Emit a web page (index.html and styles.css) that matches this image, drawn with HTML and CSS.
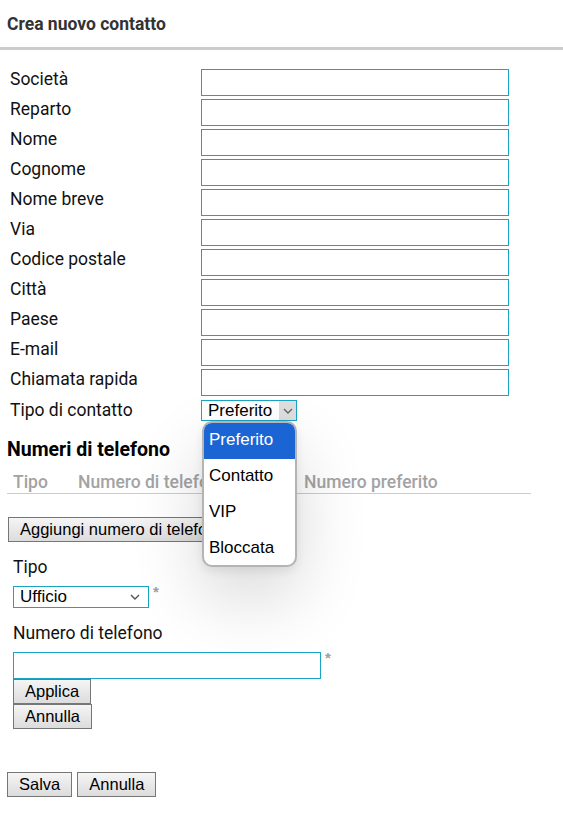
FILE: index.html
```html
<!DOCTYPE html>
<html lang="it">
<head>
<meta charset="utf-8">
<title>Crea nuovo contatto</title>
<link rel="stylesheet" href="styles.css">
</head>
<body>
<header class="topbar"><h1 class="title">Crea nuovo contatto</h1></header>

<form class="contact-form">
  <div class="row"><label class="lbl">Società</label><div class="field"></div></div>
  <div class="row"><label class="lbl">Reparto</label><div class="field"></div></div>
  <div class="row"><label class="lbl">Nome</label><div class="field"></div></div>
  <div class="row"><label class="lbl">Cognome</label><div class="field"></div></div>
  <div class="row"><label class="lbl">Nome breve</label><div class="field"></div></div>
  <div class="row"><label class="lbl">Via</label><div class="field"></div></div>
  <div class="row"><label class="lbl">Codice postale</label><div class="field"></div></div>
  <div class="row"><label class="lbl">Città</label><div class="field"></div></div>
  <div class="row"><label class="lbl">Paese</label><div class="field"></div></div>
  <div class="row"><label class="lbl">E-mail</label><div class="field"></div></div>
  <div class="row"><label class="lbl">Chiamata rapida</label><div class="field"></div></div>
  <div class="row last">
    <label class="lbl">Tipo di contatto</label>
    <div class="select-wrap">
      <div class="select type-select"><span class="sel-text">Preferito</span><span class="sel-arrow"><svg width="10" height="6" viewBox="0 0 10 6"><path d="M1 1l4 4 4-4" fill="none" stroke="#666" stroke-width="1.4"/></svg></span></div>
      <ul class="menu">
        <li class="opt active">Preferito</li>
        <li class="opt">Contatto</li>
        <li class="opt">VIP</li>
        <li class="opt">Bloccata</li>
      </ul>
    </div>
  </div>
</form>

<section class="phones">
  <h2 class="sub">Numeri di telefono</h2>
  <div class="thead">
    <span class="th c1">Tipo</span>
    <span class="th c2">Numero di telefono</span>
    <span class="th c3">Numero preferito</span>
  </div>
  <button type="button" class="btn add">Aggiungi numero di telefono</button>

  <div class="editor">
    <div class="ed-label">Tipo</div>
    <div class="ed-line">
      <div class="select small-select"><span class="sel-text">Ufficio</span><svg class="chev" width="10" height="6" viewBox="0 0 10 6"><path d="M1 1l4 4 4-4" fill="none" stroke="#555" stroke-width="1.4"/></svg></div>
      <span class="req">*</span>
    </div>
    <div class="ed-label num-label">Numero di telefono</div>
    <div class="ed-line">
      <div class="field phone-field"></div>
      <span class="req">*</span>
    </div>
    <div class="ed-buttons">
      <button type="button" class="btn">Applica</button>
      <button type="button" class="btn">Annulla</button>
    </div>
  </div>
</section>

<div class="footer-buttons">
  <button type="button" class="btn">Salva</button>
  <button type="button" class="btn">Annulla</button>
</div>
</body>
</html>
```

FILE: styles.css
```css
* { box-sizing: border-box; }
html, body { margin: 0; padding: 0; background: #fff; }
body { font-family: Roboto, "Noto Sans", Arial, sans-serif; color: #111; width: 563px; }

.topbar {
  height: 50px;
  border-bottom: 3px solid #cccccc;
  padding: 0 7px;
  display: flex;
  align-items: center;
}
.title { margin: 0; font-size: 17.5px; font-weight: 700; color: #333; line-height: 20px; position: relative; top: 0; }

.contact-form { margin-top: 19px; padding-left: 10px; display: flex; flex-direction: column; gap: 3px; }
.row { display: grid; grid-template-columns: 191px 308px; height: 27px; }
.row.last { height: 22px; }
.lbl { font-size: 17.5px; line-height: 21px; color: #111; }
.row.last .lbl { line-height: 22px; }
.field { height: 27px; border: 1px solid #1aa4c4; background: #fff; }

.select-wrap { position: relative; width: 96px; }
.select { border: 1px solid #1aa4c4; background: #fff; display: flex; align-items: center; font-family: "Liberation Sans", Arial, sans-serif; font-size: 17px; color: #000; }
.type-select { height: 21px; margin-top: 1px; width: 96px; padding-left: 6px; }
.type-select .sel-text { flex: 1; line-height: 19px; }
.sel-arrow { width: 17px; height: 19px; background: #dedede; display: flex; align-items: center; justify-content: center; }

.menu {
  position: absolute; top: 22px; left: 1px; width: 95px; height: 146px;
  margin: 0; padding: 0; list-style: none;
  background: #fff; border: 2px solid #b4b4b4; border-radius: 10px; overflow: hidden;
  box-shadow: 0 30px 70px rgba(0,0,0,0.16), 0 4px 10px rgba(0,0,0,0.08);
  font-family: "Liberation Sans", Arial, sans-serif; font-size: 17px; color: #000;
  z-index: 5;
}
.opt { height: 36px; line-height: 34px; padding-left: 5px; }
.opt.active { background: #1b64d4; color: #fff; }

.phones { padding: 0 0 0 7px; }
.sub { margin: 18px 0 0; font-size: 19.5px; line-height: 22px; font-weight: 700; color: #000; }
.thead { margin-top: 11px; width: 524px; border-bottom: 1px solid #cccccc; display: grid; grid-template-columns: 65px 226px auto; height: 22px; padding-left: 6px; }
.th { font-size: 17.5px; font-weight: 500; color: #a3a3a3; line-height: 20px; }

.btn {
  font-family: "Liberation Sans", Arial, sans-serif; font-size: 16.5px; color: #000;
  background: linear-gradient(#f5f5f5, #dcdcdc);
  border: 1px solid #767676; border-radius: 0;
  height: 25px; padding: 0 11px; margin: 0; line-height: 21px;
  display: block;
}
.btn.add { margin-top: 23px; margin-left: 1px; height: 25px; }

.editor { padding-left: 6px; }
.ed-label { font-size: 17.5px; line-height: 21px; margin-top: 15px; color: #111; }
.num-label { margin-top: 15px; }
.ed-line { display: flex; align-items: flex-start; margin-top: 8px; }
.small-select { width: 136px; height: 22px; padding: 0 8px 0 6px; justify-content: space-between; }
.small-select .sel-text { line-height: 20px; }
.req { color: #a0a0a0; font-size: 15px; font-weight: 700; line-height: 12px; margin-left: 4px; font-family: "Liberation Sans", Arial, sans-serif; }
.phone-field { width: 308px; height: 27px; }
.ed-buttons { display: flex; flex-direction: column; align-items: flex-start; }
.ed-buttons .btn { padding: 0 11px; }

.footer-buttons { display: flex; gap: 5px; padding-left: 7px; margin-top: 43px; }
```
